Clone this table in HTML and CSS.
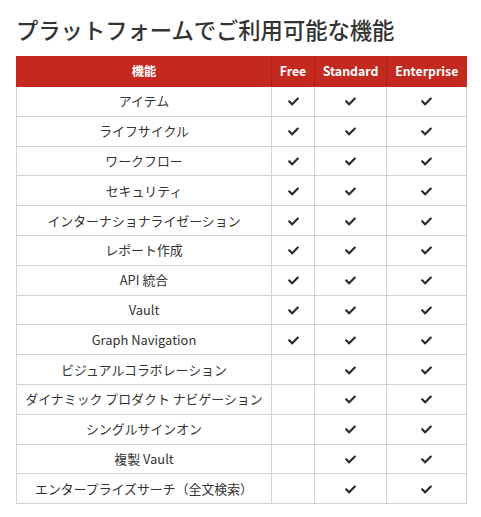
FILE: index.html
```
<!DOCTYPE html>
<html lang="ja">
<head>
<meta charset="utf-8">
<link rel="stylesheet" href="styles.css">
</head>
<body>
<h2 class="title">プラットフォームでご利用可能な機能</h2>
<svg width="0" height="0" class="defs"><defs><symbol id="chk" viewBox="0 0 512 512"><path d="M173.898 439.404l-166.4-166.4c-9.997-9.997-9.997-26.206 0-36.204l36.203-36.204c9.997-9.998 26.207-9.998 36.204 0L192 312.69 432.095 72.596c9.997-9.997 26.207-9.997 36.204 0l36.203 36.204c9.997 9.997 9.997 26.206 0 36.204l-294.4 294.401c-9.998 9.997-26.207 9.997-36.204-.001z"/></symbol></defs></svg>
<table class="features">
<colgroup><col class="c-name"><col class="c-free"><col class="c-std"><col class="c-ent"></colgroup>
<thead>
<tr><th>機能</th><th>Free</th><th>Standard</th><th>Enterprise</th></tr>
</thead>
<tbody>
<tr><td>アイテム</td><td><svg class="ck"><use href="#chk"/></svg></td><td><svg class="ck"><use href="#chk"/></svg></td><td><svg class="ck"><use href="#chk"/></svg></td></tr>
<tr><td>ライフサイクル</td><td><svg class="ck"><use href="#chk"/></svg></td><td><svg class="ck"><use href="#chk"/></svg></td><td><svg class="ck"><use href="#chk"/></svg></td></tr>
<tr><td>ワークフロー</td><td><svg class="ck"><use href="#chk"/></svg></td><td><svg class="ck"><use href="#chk"/></svg></td><td><svg class="ck"><use href="#chk"/></svg></td></tr>
<tr><td>セキュリティ</td><td><svg class="ck"><use href="#chk"/></svg></td><td><svg class="ck"><use href="#chk"/></svg></td><td><svg class="ck"><use href="#chk"/></svg></td></tr>
<tr><td>インターナショナライゼーション</td><td><svg class="ck"><use href="#chk"/></svg></td><td><svg class="ck"><use href="#chk"/></svg></td><td><svg class="ck"><use href="#chk"/></svg></td></tr>
<tr><td>レポート作成</td><td><svg class="ck"><use href="#chk"/></svg></td><td><svg class="ck"><use href="#chk"/></svg></td><td><svg class="ck"><use href="#chk"/></svg></td></tr>
<tr><td>API 統合</td><td><svg class="ck"><use href="#chk"/></svg></td><td><svg class="ck"><use href="#chk"/></svg></td><td><svg class="ck"><use href="#chk"/></svg></td></tr>
<tr><td>Vault</td><td><svg class="ck"><use href="#chk"/></svg></td><td><svg class="ck"><use href="#chk"/></svg></td><td><svg class="ck"><use href="#chk"/></svg></td></tr>
<tr><td>Graph Navigation</td><td><svg class="ck"><use href="#chk"/></svg></td><td><svg class="ck"><use href="#chk"/></svg></td><td><svg class="ck"><use href="#chk"/></svg></td></tr>
<tr><td>ビジュアルコラボレーション</td><td></td><td><svg class="ck"><use href="#chk"/></svg></td><td><svg class="ck"><use href="#chk"/></svg></td></tr>
<tr><td>ダイナミック プロダクト ナビゲーション</td><td></td><td><svg class="ck"><use href="#chk"/></svg></td><td><svg class="ck"><use href="#chk"/></svg></td></tr>
<tr><td>シングルサインオン</td><td></td><td><svg class="ck"><use href="#chk"/></svg></td><td><svg class="ck"><use href="#chk"/></svg></td></tr>
<tr><td>複製 Vault</td><td></td><td><svg class="ck"><use href="#chk"/></svg></td><td><svg class="ck"><use href="#chk"/></svg></td></tr>
<tr><td>エンタープライズサーチ（全文検索）</td><td></td><td><svg class="ck"><use href="#chk"/></svg></td><td><svg class="ck"><use href="#chk"/></svg></td></tr>
</tbody>
</table>
</body>
</html>
```
FILE: styles.css
```
html, body {
  margin: 0;
  padding: 0;
  background: #fff;
}
body {
  padding: 14px 16px;
  font-family: "Noto Sans CJK JP", "Noto Sans", sans-serif;
  color: #333;
}
.defs {
  position: absolute;
  width: 0;
  height: 0;
}
.title {
  margin: 0 0 12px 0;
  font-size: 22.3px;
  font-weight: 500;
  line-height: 30px;
  color: #333;
}
.features {
  border-collapse: collapse;
  table-layout: fixed;
  width: 450px;
  font-size: 12.9px;
}
.c-name { width: 255px; }
.c-free { width: 43px; }
.c-std { width: 72px; }
.c-ent { width: 80px; }
.features th {
  background: #c42920;
  color: #fff;
  font-weight: 700;
  font-size: 12.3px;
  height: 30px;
  padding: 0;
  border-left: 1px solid #a8221b;
  border-bottom: 1px solid #c42920;
  text-align: center;
}
.features th:first-child { border-left: 1px solid #c42920; }
.features td {
  border: 1px solid #d3d3d3;
  height: 28.8px;
  padding: 0;
  text-align: center;
  vertical-align: middle;
  line-height: 18px;
}
.ck {
  width: 11px;
  height: 11px;
  fill: #2b2b2b;
  display: inline-block;
  vertical-align: middle;
  position: relative;
  top: -1px;
}
```
